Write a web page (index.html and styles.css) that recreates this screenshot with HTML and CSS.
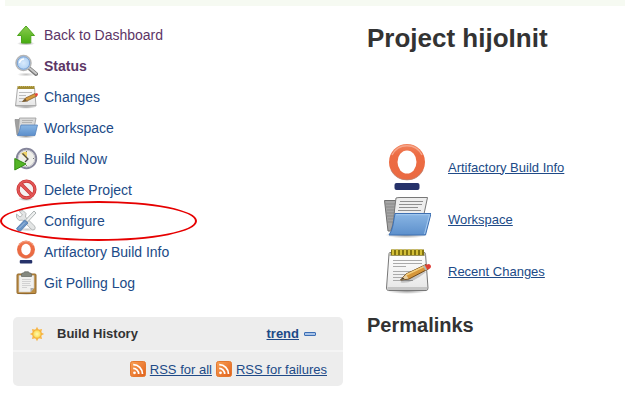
FILE: index.html
```html
<!DOCTYPE html>
<html lang="en">
<head>
<meta charset="utf-8">
<title>Project hijoInit</title>
<link rel="stylesheet" href="styles.css">
</head>
<body>
<svg class="defs" aria-hidden="true">
  <defs>
    <linearGradient id="green" x1="0" y1="0" x2="0" y2="1"><stop offset="0" stop-color="#8ccc50"/><stop offset="1" stop-color="#46ac10"/></linearGradient>
    <linearGradient id="blue" x1="0" y1="0" x2="0" y2="1"><stop offset="0" stop-color="#8ab6e4"/><stop offset="1" stop-color="#5d90cc"/></linearGradient>
    <linearGradient id="page" x1="0" y1="0" x2="0" y2="1"><stop offset="0" stop-color="#ffffff"/><stop offset="1" stop-color="#e6e6e6"/></linearGradient>
    <linearGradient id="orange" x1="0" y1="0" x2="0" y2="1"><stop offset="0" stop-color="#f0825c"/><stop offset=".3" stop-color="#ed6c43"/><stop offset="1" stop-color="#ea6a42"/></linearGradient>
    <linearGradient id="feed" x1="0" y1="0" x2="1" y2="1"><stop offset="0" stop-color="#f9a155"/><stop offset="1" stop-color="#e0601c"/></linearGradient>
    <radialGradient id="lens"><stop offset="0" stop-color="#d9eafc"/><stop offset="1" stop-color="#a9cdf2"/></radialGradient>
    <radialGradient id="shadow"><stop offset="0" stop-color="#000" stop-opacity=".4"/><stop offset="1" stop-color="#000" stop-opacity="0"/></radialGradient>
    <radialGradient id="sunfill"><stop offset="0" stop-color="#fffbb0"/><stop offset="1" stop-color="#fbd84c"/></radialGradient>

    <symbol id="artifactory" viewBox="0 0 48 48">
      <circle cx="24" cy="19" r="18" fill="url(#orange)"/>
      <path d="M9 12A16.700 16.700 0 0 1 39 12" fill="none" stroke="#f6a78c" stroke-width="1.500"/>
      <path d="M8 27A17.900 17.900 0 0 0 40 27" fill="none" stroke="#b98270" stroke-width=".8"/>
      <ellipse cx="24" cy="19" rx="9.500" ry="11.500" fill="#fff"/>
      <rect x="11.500" y="40" width="25" height="7" rx="2" fill="#26326a"/>
    </symbol>

    <symbol id="folder" viewBox="0 0 48 48">
      <ellipse cx="23" cy="40" rx="21" ry="3.500" fill="url(#shadow)"/>
      <path d="M1.500 5.500H14L15 36H5Z" fill="#a4a4a4" stroke="#6f6f6f"/>
      <path d="M3 9H12M3 12H12M4 15H12M4 18H12M4 21H11M5 24H11M5 27H10" stroke="#898989"/>
      <path d="M13 3Q15 2.500 17 2.500H44.500L41 19L8 35Q11 28 11.500 15Z" fill="#ededed" stroke="#777"/>
      <path d="M17 6.500H40M16 9.500H39M16 12.500H35M15 15.500H38" stroke="#8f8f8f"/>
      <path d="M12 18.500H48L42.500 40H6Q9 36 10 30Z" fill="url(#blue)" stroke="#3e70b2"/>
      <path d="M13 19.700H46.500L41.500 39" fill="none" stroke="#a6caef"/>
    </symbol>

    <symbol id="folder-small" viewBox="0 0 24 24">
      <ellipse cx="12" cy="20.500" rx="10" ry="1.800" fill="url(#shadow)"/>
      <path d="M1 3.500H5L7 19H3Z" fill="#a0a0a0" stroke="#8a8a8a" stroke-width=".7"/>
      <path d="M5.500 2H22L20.500 10L4 18Z" fill="#d9d9d9" stroke="#999" stroke-width=".8"/>
      <path d="M8 4.500H19M8 6.500H18" stroke="#b2b2b2"/>
      <path d="M7 9H23.500L21 19.500H3.500Q5 17 5.500 14.500Z" fill="url(#blue)" stroke="#5583bd" stroke-width=".8"/>
    </symbol>

    <symbol id="notepad" viewBox="0 0 48 48">
      <ellipse cx="24" cy="44" rx="20" ry="3" fill="url(#shadow)"/>
      <path d="M7 5.500H41Q42.500 5.500 42.500 7L45 41Q45 43.500 43 43.500H5.500Q3.500 43.500 3.500 41L6 7Q6 5.500 7 5.500Z" fill="url(#page)" stroke="#777"/>
      <path d="M6 6H42.500V9H6Z" fill="#b5b5ad"/>
      <path d="M4.500 40H44V43H4.500Z" fill="#c5c5c5"/>
      <path d="M10 13.500H39M10 16.500H39M10 19.500H23M10 24.500H30M10 27.500H27M10 30.500H24M10 33.500H30" stroke="#aaa"/>
      <path d="M8 5.500H41" stroke="#82730f" stroke-width="6"/>
      <path d="M10 2.500V8M14 2.500V8M18 2.500V8M22 2.500V8M26 2.500V8M30 2.500V8M34 2.500V8M38 2.500V8" stroke="#d3bf37" stroke-width="2"/>
      <path d="M18 34Q27 36 42 24" fill="none" stroke="#000" stroke-opacity=".18" stroke-width="3"/>
      <path d="M17.500 33L23 27L43 17.500L46 21.500L26 32Z" fill="#d6963a" stroke="#6f491a"/>
      <path d="M23 28L42 19" stroke="#f4cf7d" stroke-width="1.500"/>
      <path d="M17.500 33L23 27.500L25.500 31.500Z" fill="#ead0a0"/><path d="M17.500 33L20 30.500L21.500 32Z" fill="#3b3429"/>
      <path d="M40 19L42.500 23.500L44 22.700L41.500 18.200Z" fill="#aeb7c0"/>
      <path d="M42 18L46 17Q49 18 47.500 21L44.500 22.700Z" fill="#df3d37"/>
    </symbol>

    <symbol id="notepad-small" viewBox="0 0 24 24">
      <ellipse cx="12" cy="22" rx="10" ry="1.800" fill="url(#shadow)"/>
      <path d="M3.500 3H20.500L22 21H1.500Z" fill="url(#page)" stroke="#aaa"/>
      <path d="M2 20.500H22" stroke="#aaa"/>
      <path d="M3.500 2.500H20.500" stroke="#a18d35" stroke-width="3"/><path d="M4 1.500H20" stroke="#c4b25f" stroke-dasharray="1 1"/>
      <path d="M5 7.500H18M5 10.500H12M5 13.500H11M5 16.500H14" stroke="#bcbcbc"/>
      <path d="M8.500 16.500L11.500 13L21 8.500L23 11L13 16Z" fill="#d69b3d" stroke="#7b531f" stroke-width=".7"/>
      <path d="M8.500 16.500L11.500 13.500L12.500 16Z" fill="#6d5937"/>
      <path d="M20.500 9L23 8Q24.500 9 23.500 10.500L22 11.500Z" fill="#e5453e"/>
    </symbol>

    <symbol id="up" viewBox="0 0 24 24">
      <ellipse cx="12" cy="20.500" rx="9" ry="2" fill="url(#shadow)"/>
      <path d="M12 3L20.500 12.500H16.800V20H7.500V12.500H3.500Z" fill="url(#green)" stroke="#4da51d"/>
    </symbol>

    <symbol id="search" viewBox="0 0 24 24">
      <ellipse cx="12" cy="20.500" rx="9" ry="2" fill="url(#shadow)" opacity=".6"/>
      <path d="M15.500 14.500L22 20" stroke="#777" stroke-width="4" stroke-linecap="round"/>
      <path d="M16 14.500L22 19.500" stroke="#c7c7c7" stroke-width="2" stroke-linecap="round"/>
      <circle cx="9.500" cy="9" r="7.500" fill="url(#lens)" stroke="#b5b5b5" stroke-width="1.500"/>
      <circle cx="9.500" cy="9" r="6.200" fill="none" stroke="#7ba2d4" stroke-width="1"/>
      <path d="M5.500 9Q6 5.500 10 5" fill="none" stroke="#fff" stroke-width="1.500"/>
    </symbol>

    <symbol id="build" viewBox="0 0 24 24">
      <circle cx="12.500" cy="11.500" r="9.700" fill="#efefe9" stroke="#85859a" stroke-width="2"/>
      <circle cx="12.500" cy="11.500" r="8.300" fill="none" stroke="#c5c5cc"/>
      <path d="M13 12L7 6.500Q9.500 4.500 13 4.500Z" fill="#efd266"/>
      <path d="M8.500 6.500L14 12L11 15" fill="none" stroke="#504d48" stroke-width="1.300"/>
      <path d="M12.500 4V5M20 11.500H19M12.500 19V18" stroke="#777"/>
      <path d="M.8 11.500L12 17L.8 23Z" fill="#55b527" stroke="#318c10"/>
    </symbol>

    <symbol id="delete" viewBox="0 0 24 24">
      <ellipse cx="12" cy="21" rx="8" ry="2" fill="url(#shadow)"/>
      <circle cx="12.500" cy="11.500" r="8.400" fill="#f4f1f1" stroke="#c43030" stroke-width="3.200"/>
      <path d="M6.500 5.500L18.500 17.500" stroke="#c43030" stroke-width="3.400"/>
      <circle cx="12.500" cy="11.500" r="8.400" fill="none" stroke="#e25555" stroke-width="2"/>
      <path d="M6.500 5.500L18.500 17.500" stroke="#e25555" stroke-width="2.200"/>
    </symbol>

    <symbol id="tools" viewBox="0 0 24 24">
      <ellipse cx="13" cy="20.500" rx="10" ry="2" fill="url(#shadow)" opacity=".5"/>
      <path d="M5 2L9 1.500L12 4.500L11.500 8L20.500 17Q22 19 20.500 20.500Q18.500 21.500 17 20L8.500 11L5 11.500L2.500 8.500V5L6 8L8.500 6Z" fill="#e3e5e5" stroke="#b5b9b9"/>
      <path d="M20 2L22 4L13.500 13L11.500 11Z" fill="#eef0f0" stroke="#9aa1a1" stroke-width=".8"/>
      <path d="M10.500 11L14 14L6.500 22Q3.500 22.500 2.500 19.500Z" fill="#6a94c5" stroke="#4774ab" stroke-width=".8"/>
      <path d="M11 13.500L5 19.500" stroke="#a7c4e4"/>
    </symbol>

    <symbol id="clipboard" viewBox="0 0 24 24">
      <ellipse cx="12.500" cy="22.500" rx="11" ry="1.500" fill="url(#shadow)"/>
      <rect x="3" y="3" width="19" height="19.500" rx="1" fill="#bd8e43" stroke="#94692c"/>
      <path d="M5 4.500H20V17L16.500 21H5Z" fill="#f1f1ef" stroke="#c9c5bc" stroke-width=".6"/>
      <path d="M20 17L16.500 21V17Z" fill="#aaa"/>
      <path d="M8 8.500H17M8 10.500H17M8 12.500H16M8 14.500H17M8 16.500H13" stroke="#d2d2d2"/>
      <path d="M7.500 5.500V3Q7.500 2 9.500 2L10.500 .8H14.500L15.500 2Q17.500 2 17.500 3V5.500Z" fill="#858980" stroke="#62665e" stroke-width=".7"/>
    </symbol>

    <symbol id="sun" viewBox="0 0 16 16">
      <path d="M8 .8L9.600 3.800L13.100 2.900L12.200 6.400L15.200 8L12.200 9.600L13.100 13.100L9.600 12.200L8 15.200L6.400 12.200L2.900 13.100L3.800 9.600L.8 8L3.800 6.400L2.900 2.900L6.400 3.800Z" fill="#f9b84a"/>
      <circle cx="8" cy="8" r="4.200" fill="url(#sunfill)" stroke="#f0a73a" stroke-width=".8"/>
    </symbol>

    <symbol id="rss" viewBox="0 0 16 16">
      <rect x=".5" y=".5" width="15" height="15" rx="2" fill="url(#feed)" stroke="#e4782f"/>
      <circle cx="4.500" cy="11.800" r="1.400" fill="#fff"/>
      <path d="M3.200 7.400A5.500 5.500 0 0 1 8.700 13M3.200 3.700A9.300 9.300 0 0 1 12.500 13" fill="none" stroke="#fff" stroke-width="1.700"/>
    </symbol>
  </defs>
</svg>

<header class="topbar"></header>
<div class="layout">
  <aside class="side">
    <nav>
      <ul class="tasks">
        <li class="task"><svg class="icon"><use href="#up"/></svg><a class="visited" href="#">Back to Dashboard</a></li>
        <li class="task"><svg class="icon"><use href="#search"/></svg><a class="visited current" href="#">Status</a></li>
        <li class="task"><svg class="icon"><use href="#notepad-small"/></svg><a href="#">Changes</a></li>
        <li class="task"><svg class="icon"><use href="#folder-small"/></svg><a href="#">Workspace</a></li>
        <li class="task"><svg class="icon"><use href="#build"/></svg><a href="#">Build Now</a></li>
        <li class="task"><svg class="icon"><use href="#delete"/></svg><a href="#">Delete Project</a></li>
        <li class="task marked"><svg class="icon"><use href="#tools"/></svg><a href="#">Configure</a></li>
        <li class="task"><svg class="icon"><use href="#artifactory"/></svg><a href="#">Artifactory Build Info</a></li>
        <li class="task"><svg class="icon"><use href="#clipboard"/></svg><a href="#">Git Polling Log</a></li>
      </ul>
    </nav>
    <section class="history">
      <div class="history-head">
        <svg class="icon-small"><use href="#sun"/></svg>
        <h2 class="history-title">Build History</h2>
        <a class="trend" href="#">trend</a>
        <button class="collapse" type="button" aria-label="Collapse"></button>
      </div>
      <div class="feeds">
        <svg class="icon-small"><use href="#rss"/></svg><a href="#">RSS for all</a>
        <svg class="icon-small"><use href="#rss"/></svg><a href="#">RSS for failures</a>
      </div>
    </section>
  </aside>
  <main class="main">
    <h1 class="title">Project hijoInit</h1>
    <ul class="shortcuts">
      <li class="shortcut"><svg class="icon-large"><use href="#artifactory"/></svg><a href="#">Artifactory Build Info</a></li>
      <li class="shortcut"><svg class="icon-large"><use href="#folder"/></svg><a href="#">Workspace</a></li>
      <li class="shortcut"><svg class="icon-large"><use href="#notepad"/></svg><a href="#">Recent Changes</a></li>
    </ul>
    <h2 class="subtitle">Permalinks</h2>
  </main>
</div>
</body>
</html>
```
FILE: styles.css
```css
*, *::before, *::after { box-sizing: border-box; }

body {
  margin: 0;
  background: #fff;
  color: #333;
  font-family: "Liberation Sans", Arial, sans-serif;
  font-size: 13px;
}

a { color: #204a87; }

ul {
  margin: 0;
  padding: 0;
  list-style: none;
}

h1, h2 { margin: 0; }

svg { flex: none; }

.defs {
  position: absolute;
  width: 0;
  height: 0;
}

.topbar {
  height: 6px;
  margin-left: 5px;
  background: #f6faf2;
}

.layout {
  display: grid;
  grid-template-columns: 330px 1fr;
  column-gap: 24px;
  padding: 13px 0 16px 13px;
}

.task {
  display: flex;
  align-items: center;
  gap: 6px;
  height: 31px;
  padding-left: 1px;
  font-size: 14px;
}

.task a { text-decoration: none; }

.task .visited { color: #5c3566; }

.task .current { font-weight: bold; }

.icon {
  width: 24px;
  height: 24px;
}

.icon-small {
  width: 16px;
  height: 16px;
}

.icon-large {
  width: 48px;
  height: 48px;
}

.marked { position: relative; }

.marked::after {
  content: "";
  position: absolute;
  top: -4px;
  left: -13px;
  width: 197px;
  height: 40px;
  border: 2px solid #e60000;
  border-radius: 50%;
  pointer-events: none;
}

.history {
  margin-top: 19px;
  border-radius: 5px;
  background: #ededed;
}

.history-head {
  display: flex;
  align-items: center;
  height: 35px;
  padding: 0 27px 0 16px;
  border-bottom: 2px solid #f4f4f4;
}

.history-title {
  margin-left: 12px;
  font-size: 13px;
}

.trend {
  margin-left: auto;
  font-weight: bold;
}

.collapse {
  width: 12px;
  height: 4px;
  margin-left: 5px;
  padding: 0;
  border: 1px solid #3c6eb4;
  border-radius: 1px;
  background: #a9c4e8;
}

.feeds {
  display: flex;
  align-items: center;
  justify-content: flex-end;
  gap: 4px;
  height: 34px;
  padding-right: 16px;
}

.title {
  padding-top: 4px;
  font-size: 26px;
  line-height: 30px;
}

.shortcuts {
  display: grid;
  gap: 4px;
  margin-top: 90px;
  padding-left: 16px;
}

.shortcut {
  display: flex;
  align-items: center;
  gap: 17px;
}

.subtitle {
  margin-top: 18px;
  font-size: 20px;
  line-height: 24px;
}
```
